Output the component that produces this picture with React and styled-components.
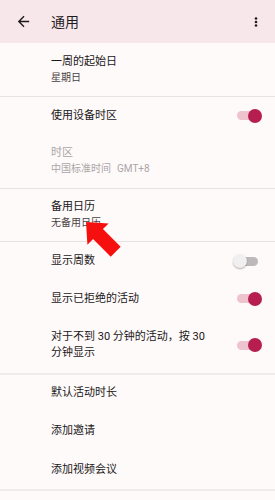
import React from "react";
import styled, { createGlobalStyle } from "styled-components";

const Global = createGlobalStyle`
  html, body { margin: 0; padding: 0; background: #fefafa; }
  body { font-family: Roboto, "Noto Sans CJK SC", sans-serif; -webkit-font-smoothing: antialiased; }
  * { box-sizing: border-box; }
`;

const Page = styled.div`
  position: relative;
  width: 275px;
  height: 500px;
  overflow: hidden;
  background: #fefafa;
`;

const Header = styled.header`
  height: 43px;
  background: #f7e7eb;
  display: flex;
  align-items: center;
  padding: 0 10px 0 14px;
`;

const IconBtn = styled.div`
  width: 18px;
  height: 18px;
  display: flex;
  align-items: center;
  justify-content: center;
  color: #1f1b1d;
`;

const Title = styled.h1`
  flex: 1;
  margin: 0 0 0 19px;
  font-size: 14px;
  font-weight: 400;
  color: #1f1b1d;
  line-height: 20px;
`;

const Row = styled.div`
  height: ${(p) => p.$h}px;
  display: flex;
  align-items: center;
  padding: 0 12px 0 51px;
`;

const Texts = styled.div`
  flex: 1;
  display: flex;
  flex-direction: column;
`;

const Primary = styled.div`
  font-size: 11px;
  line-height: 16px;
  white-space: pre-line;
  color: ${(p) => (p.$disabled ? "#aba5a7" : "#1a1718")};
`;

const Secondary = styled.div`
  font-size: 10px;
  line-height: 16px;
  color: ${(p) => (p.$disabled ? "#aba5a7" : "#4a4245")};
`;

const Gap = styled.span`
  display: inline-block;
  width: 6px;
`;

const Divider = styled.div`
  height: ${(p) => (p.$thick ? 2 : 1)}px;
  background: ${(p) => (p.$thick ? "#f1ebeb" : "#e9e2e3")};
`;

const SwitchBox = styled.div`
  position: relative;
  width: 30px;
  height: 14px;
  flex: none;
  margin-left: 8px;
  align-self: center;
`;

const Track = styled.div`
  position: absolute;
  left: 4px;
  top: 2.5px;
  width: 21px;
  height: 9px;
  border-radius: 5px;
  background: ${(p) => (p.$on ? "#eec3ce" : "#bdb9ba")};
`;

const Thumb = styled.div`
  position: absolute;
  top: 0;
  left: ${(p) => (p.$on ? 15 : 0)}px;
  width: 14px;
  height: 14px;
  border-radius: 50%;
  background: ${(p) => (p.$on ? "#b71e50" : "#f1f0f0")};
  box-shadow: ${(p) => (p.$on ? "none" : "0 1px 1.5px rgba(0,0,0,0.3)")};
`;

const Pointer = styled.svg`
  position: absolute;
  left: 78px;
  top: 214px;
  width: 46px;
  height: 46px;
`;

const Switch = ({ on }) => (
  <SwitchBox>
    <Track $on={on} />
    <Thumb $on={on} />
  </SwitchBox>
);

const Item = ({ h, title, sub, toggle, disabled }) => (
  <Row $h={h}>
    <Texts>
      <Primary $disabled={disabled}>{title}</Primary>
      {sub && <Secondary $disabled={disabled}>{sub}</Secondary>}
    </Texts>
    {toggle !== undefined && <Switch on={toggle} />}
  </Row>
);

export default function App() {
  return (
    <Page>
      <Global />
      <Header>
        <IconBtn>
          <svg width="17" height="17" viewBox="0 0 24 24">
            <path fill="currentColor" d="M20 11H7.83l5.59-5.59L12 4l-8 8 8 8 1.41-1.41L7.83 13H20v-2z" />
          </svg>
        </IconBtn>
        <Title>通用</Title>
        <IconBtn>
          <svg width="16" height="16" viewBox="0 0 16 16">
            <circle cx="8" cy="4.5" r="1.3" fill="currentColor" />
            <circle cx="8" cy="8" r="1.3" fill="currentColor" />
            <circle cx="8" cy="11.5" r="1.3" fill="currentColor" />
          </svg>
        </IconBtn>
      </Header>
      <Item h={53} title="一周的起始日" sub="星期日" />
      <Divider />
      <Item h={37} title="使用设备时区" toggle={true} />
      <Item h={54} title="时区" sub={<>中国标准时间<Gap />GMT+8</>} disabled />
      <Divider />
      <Item h={52} title="备用日历" sub="无备用日历" />
      <Divider />
      <Item h={38} title="显示周数" toggle={false} />
      <Item h={37} title="显示已拒绝的活动" toggle={true} />
      <Item h={56} title={"对于不到 30 分钟的活动，按 30\n分钟显示"} toggle={true} />
      <Divider $thick />
      <Item h={36} title="默认活动时长" />
      <Item h={39} title="添加邀请" />
      <Item h={39} title="添加视频会议" />
      <Divider $thick />
      <Pointer viewBox="0 0 46 46">
        <g transform="translate(8 8) rotate(-45)">
          <polygon fill="#f50f0f" points="0,0 15,17 7,17 7,42 -7,42 -7,17 -15,17" />
        </g>
      </Pointer>
    </Page>
  );
}
